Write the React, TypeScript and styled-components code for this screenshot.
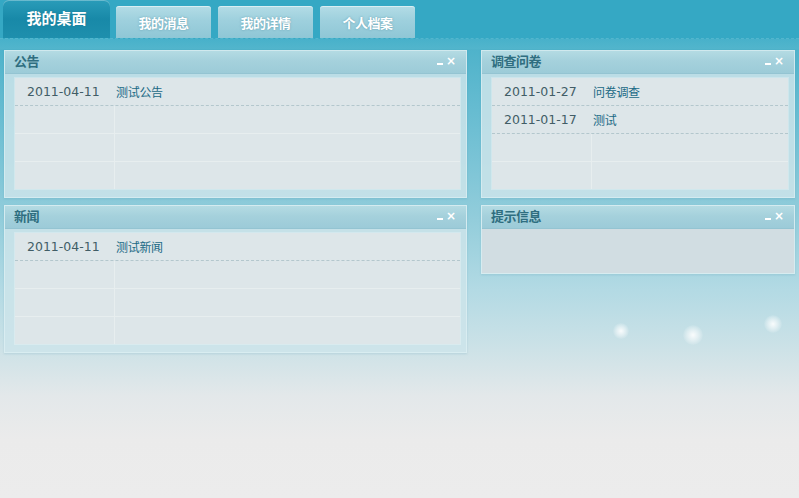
import React from 'react'
import styled, { createGlobalStyle } from 'styled-components'

const GlobalStyle = createGlobalStyle`
    html, body {
        margin: 0;
        padding: 0;
    }
    body {
        font-family: "DejaVu Sans", "Noto Sans CJK SC", sans-serif;
    }
`;

const Page = styled.div`
    position: relative;
    width: 799px;
    height: 498px;
    overflow: hidden;
    background: linear-gradient(
        to bottom,
        #36a8c4 0px,
        #4db2ca 45px,
        #6ebfd3 130px,
        #93cddb 220px,
        #b3dae4 290px,
        #cde2e7 350px,
        #e3e8ea 395px,
        #ebebeb 440px,
        #ececec 498px
    );
`;

const TabBar = styled.div`
    display: flex;
    align-items: flex-end;
    gap: 6px;
    height: 38px;
    padding-left: 3px;
    background: #35a8c4;
    border-bottom: 1px dashed rgba(120, 200, 220, 0.45);
`;

interface TabProps {
    readonly active?: boolean;
}
const Tab = styled.div<TabProps>`
    display: flex;
    align-items: center;
    justify-content: center;
    box-sizing: border-box;
    width: ${props => props.active ? 107 : 95}px;
    height: ${props => props.active ? 38 : 32}px;
    margin-right: ${props => props.active ? 0 : 1}px;
    border-radius: ${props => props.active ? '6px 6px 0 0' : '3px 3px 0 0'};
    background: ${props => props.active
        ? 'linear-gradient(to bottom, #2a9cb9 0%, #1889a8 50%, #1e8fad 100%)'
        : 'linear-gradient(to bottom, #b3dce6 0%, #9ed0dd 45%, #8fc7d6 100%)'};
    box-shadow: ${props => props.active ? 'inset 0 1px 0 rgba(255,255,255,0.3)' : 'inset 0 1px 0 rgba(255,255,255,0.5)'};
    color: #fff;
    font-family: "Noto Sans CJK SC", sans-serif;
    font-weight: bold;
    font-size: ${props => props.active ? 15 : 13}px;
    letter-spacing: ${props => props.active ? 0 : -0.5}px;
    padding-bottom: ${props => props.active ? 4 : 0}px;
    text-shadow: 0 0 2px rgba(40, 110, 130, 0.5);
`;

const Strip = styled.div`
    height: 10px;
    background: linear-gradient(to bottom, #48b1ca, #52b5cc);
`;

const Board = styled.div`
    display: grid;
    grid-template-columns: 463px 314px;
    column-gap: 14px;
    padding: 1px 0 0 4px;
`;

const Column = styled.div`
    display: flex;
    flex-direction: column;
    gap: 7px;
`;

const Panel = styled.div`
    background: rgba(205, 228, 234, 0.85);
    border: 1px solid rgba(230, 245, 248, 0.5);
    box-shadow: 0 1px 2px rgba(40, 120, 150, 0.15);
`;

const PanelHead = styled.div`
    display: flex;
    align-items: center;
    justify-content: space-between;
    box-sizing: border-box;
    height: 23px;
    padding: 0 10px 3px 9px;
    background: linear-gradient(to bottom, #b4dbe3 0%, #a5d1dc 45%, #9ccbd8 100%);
    border-bottom: 1px solid #94c4d2;
`;

const Title = styled.span`
    font-family: "Noto Sans CJK SC", sans-serif;
    font-weight: bold;
    font-size: 13px;
    color: #2f6e80;
    letter-spacing: -0.5px;
`;

const Controls = styled.span`
    display: flex;
    align-items: center;
    gap: 3px;
    color: #fff;
    font-weight: bold;
    font-size: 12px;
`;

const MinBar = styled.span`
    display: inline-block;
    width: 6px;
    height: 2px;
    margin-top: 6px;
    background: #fff;
`;

const PanelBody = styled.div`
    padding: 4px 6px 8px 10px;
`;

const EmptyBody = styled.div`
    height: 44px;
    background: #d1dde2;
`;

const Sheet = styled.div`
    background: #dde6e9;
    box-shadow: 0 0 0 1px rgba(255, 255, 255, 0.25);
`;

interface RowProps {
    readonly filled?: boolean;
}
const Row = styled.div<RowProps>`
    display: grid;
    grid-template-columns: 100px 1fr;
    height: 27px;
    align-items: center;
    border-bottom: 1px ${props => props.filled ? 'dashed #b3c7cd' : 'solid rgba(232, 238, 240, 0.9)'};
    &:last-child {
        border-bottom: none;
    }
`;

const DateCell = styled.span<RowProps>`
    height: 100%;
    display: flex;
    align-items: center;
    padding-left: 12px;
    font-size: 12.5px;
    color: #415d66;
    border-right: 1px solid ${props => props.filled ? 'transparent' : 'rgba(232, 238, 240, 0.9)'};
`;

const Link = styled.span`
    font-family: "Noto Sans CJK SC", sans-serif;
    font-size: 12px;
    color: #1b6a86;
    padding-left: 1px;
    letter-spacing: -0.3px;
`;

const Glow = styled.span`
    position: absolute;
    border-radius: 50%;
    background: radial-gradient(circle, rgba(255, 255, 255, 0.9) 0%, rgba(255, 255, 255, 0.45) 40%, rgba(255, 255, 255, 0) 75%);
`;

interface Item {
    date: string;
    title: string;
}

const ListPanel: React.FC<{ title: string; items: Item[] }> = ({ title, items }) => {
    const rows = [...items];
    while (rows.length < 4) rows.push({ date: '', title: '' });
    return (
        <Panel>
            <PanelHead>
                <Title>{title}</Title>
                <Controls><MinBar />×</Controls>
            </PanelHead>
            <PanelBody>
                <Sheet>
                    {rows.map((it, i) => (
                        <Row key={i} filled={i < items.length}>
                            <DateCell filled={i < items.length}>{it.date}</DateCell>
                            <Link>{it.title}</Link>
                        </Row>
                    ))}
                </Sheet>
            </PanelBody>
        </Panel>
    )
}

const tabs = ['我的桌面', '我的消息', '我的详情', '个人档案'];

const App: React.FC = () => (
    <Page>
        <GlobalStyle />
        <TabBar>
            {tabs.map((t, i) => <Tab key={t} active={i === 0}>{t}</Tab>)}
        </TabBar>
        <Strip />
        <Board>
            <Column>
                <ListPanel title="公告" items={[{ date: '2011-04-11', title: '测试公告' }]} />
                <ListPanel title="新闻" items={[{ date: '2011-04-11', title: '测试新闻' }]} />
            </Column>
            <Column>
                <ListPanel
                    title="调查问卷"
                    items={[
                        { date: '2011-01-27', title: '问卷调查' },
                        { date: '2011-01-17', title: '测试' },
                    ]}
                />
                <Panel>
                    <PanelHead>
                        <Title>提示信息</Title>
                        <Controls><MinBar />×</Controls>
                    </PanelHead>
                    <EmptyBody />
                </Panel>
            </Column>
        </Board>
        <Glow style={{ left: 613, top: 323, width: 16, height: 16 }} />
        <Glow style={{ left: 683, top: 325, width: 20, height: 20 }} />
        <Glow style={{ left: 764, top: 315, width: 18, height: 18 }} />
    </Page>
)

export default App
